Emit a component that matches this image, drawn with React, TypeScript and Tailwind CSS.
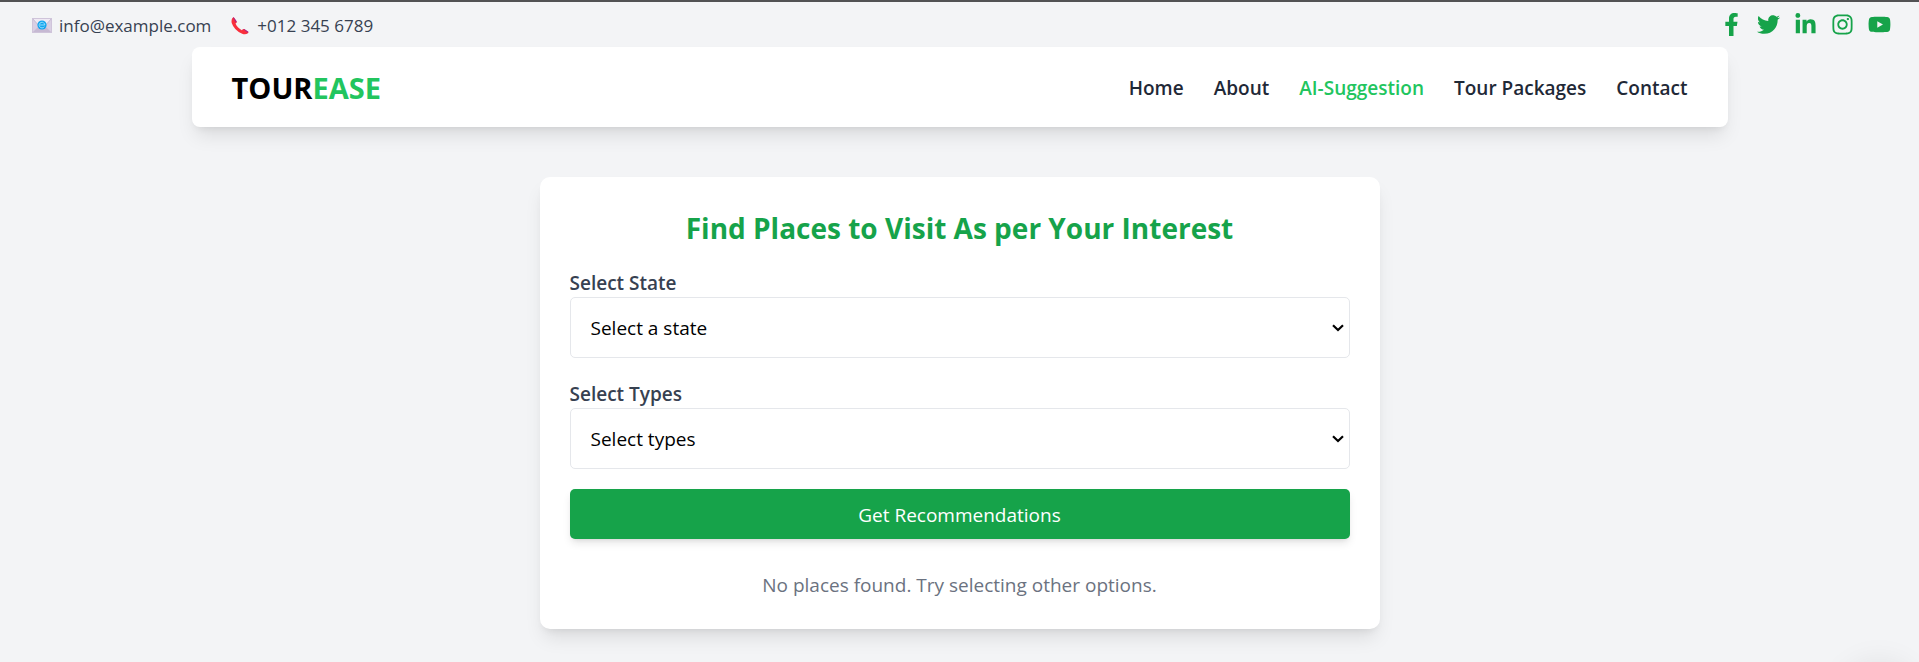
import { FaFacebookF, FaInstagram, FaLinkedinIn, FaTwitter, FaYoutube } from "react-icons/fa";

const socials = [
  { name: "Facebook", Icon: FaFacebookF },
  { name: "Twitter", Icon: FaTwitter },
  { name: "LinkedIn", Icon: FaLinkedinIn },
  { name: "Instagram", Icon: FaInstagram },
  { name: "YouTube", Icon: FaYoutube },
];

const links = ["Home", "About", "AI-Suggestion", "Tour Packages", "Contact"];

function MailIcon() {
  return (
    <svg viewBox="0 0 20 15" className="h-[15px] w-5" aria-hidden="true">
      <rect x="0.5" y="0.5" width="19" height="14" fill="#d9cfe3" />
      <path d="M1 14 7.5 7.5h5L19 14z" fill="#c6b9d3" />
      <path d="M0.5 0.5h19L12 9q-2 1.6-4 0z" fill="#efe9f4" />
      <path d="M0.5 0.5 8 9q2 1.6 4 0l7.500-8.500" fill="none" stroke="#b9aec6" strokeWidth="0.700" />
      <rect x="0.5" y="0.5" width="19" height="14" fill="none" stroke="#cfc4da" />
      <circle cx="10" cy="7" r="4.600" fill="#12a5ee" />
      <path d="M12.300 8.700A2.800 2.800 0 1 1 12.800 7H8" fill="none" stroke="#a5e3ff" strokeWidth="0.900" />
    </svg>
  );
}

function PhoneIcon() {
  return (
    <svg viewBox="0 0 18 18" className="size-[18px]" aria-hidden="true">
      <path d="M2.800 0.600 5.600 4.600Q6 5.500 5.200 6L4.500 6.600Q6.200 10.800 10.800 13.200L11.500 12.400Q12.300 11.700 13.200 12.200L17.200 14.900Q17.700 15.600 16.900 16.300 14.600 18.100 11.200 16.800 3.200 13.400 0.700 6 0.100 3 1.400 1 2.100 0.200 2.800 0.600z" fill="#f92f3c" />
      <path d="M1.900 0.600Q2.600-0.100 3.200 0.700L5.800 4.500 4.600 5.500zM12.300 12.300Q12.900 11.700 13.700 12.200L17.500 14.800 16.500 15.800z" fill="#b4237f" />
    </svg>
  );
}

function SelectField({ id, label, placeholder }: { id: string; label: string; placeholder: string }) {
  return (
    <div>
      <label htmlFor={id} className="block pt-0.5 text-[19px] leading-7 font-semibold text-[#374151]">
        {label}
      </label>
      <div className="relative">
        <select
          id={id}
          className="block h-[61px] w-full appearance-none rounded-[5px] border border-[#e5e7eb] bg-white px-5 pt-0.5 text-[19px] text-black"
        >
          <option>{placeholder}</option>
        </select>
        <svg
          viewBox="0 0 12 8"
          className="pointer-events-none absolute top-[27px] right-1.5 h-2 w-3"
          fill="none"
          stroke="#000"
          strokeWidth="2.200"
          aria-hidden="true"
        >
          <path d="M1 1.200 6 6 11 1.200" />
        </svg>
      </div>
    </div>
  );
}

export default function App() {
  return (
    <div className="relative min-h-screen overflow-hidden border-t-2 border-[#525254] bg-[#f3f4f6] font-['Open_Sans','Noto_Sans',sans-serif]">
      <div className="flex h-[45px] items-center justify-between pr-7 pl-8">
        <div className="flex items-center gap-5 pt-0.5 text-[17px] text-[#374151]">
          <span className="flex items-center gap-[7px]">
            <MailIcon />
            info@example.com
          </span>
          <span className="flex items-center gap-2">
            <PhoneIcon />
            +012 345 6789
          </span>
        </div>
        <div className="flex items-center gap-3.5 text-[#16a34a]">
          {socials.map(({ name, Icon }) => (
            <a key={name} href="#" aria-label={name}>
              <Icon className="size-[23px]" />
            </a>
          ))}
        </div>
      </div>

      <header className="mx-auto flex h-20 max-w-[1536px] items-center justify-between rounded-lg bg-white px-10 pt-0.5 shadow-[0_12px_19px_-4px_rgba(0,0,0,0.1),0_5px_8px_-5px_rgba(0,0,0,0.1)]">
        <a href="#" className="text-[29px] font-bold text-black">
          TOUR<span className="text-[#22c55e]">EASE</span>
        </a>
        <nav className="flex gap-[30px] text-[19px] font-semibold text-[#1f2937]">
          {links.map((link) => (
            <a key={link} href="#" className={link === "AI-Suggestion" ? "text-[#22c55e]" : ""}>
              {link}
            </a>
          ))}
        </nav>
      </header>

      <main className="mx-auto mt-[50px] max-w-[840px] rounded-[10px] bg-white p-[30px] shadow-[0_12px_19px_-4px_rgba(0,0,0,0.1),0_5px_8px_-5px_rgba(0,0,0,0.1)]">
        <h1 className="mb-5 pt-0.5 text-center text-[28px] leading-[38px] font-bold text-[#16a34a]">
          Find Places to Visit As per Your Interest
        </h1>
        <form>
          <div className="flex flex-col gap-5">
            <SelectField id="state" label="Select State" placeholder="Select a state" />
            <SelectField id="types" label="Select Types" placeholder="Select types" />
            <button
              type="button"
              className="h-[50px] rounded-[5px] bg-[#16a34a] pt-0.5 text-[19px] text-white shadow-[0_5px_8px_-1px_rgba(0,0,0,0.1),0_3px_5px_-3px_rgba(0,0,0,0.1)]"
            >
              Get Recommendations
            </button>
          </div>
        </form>
        <p className="mt-[30px] pt-0.5 text-center text-[19px] leading-7 text-[#6b7280]">
          No places found. Try selecting other options.
        </p>
      </main>

      <div
        aria-hidden="true"
        className="absolute right-0 -bottom-20 h-20 w-20 rounded-full shadow-[0_0_30px_rgba(0,0,0,0.08)]"
      />
    </div>
  );
}
